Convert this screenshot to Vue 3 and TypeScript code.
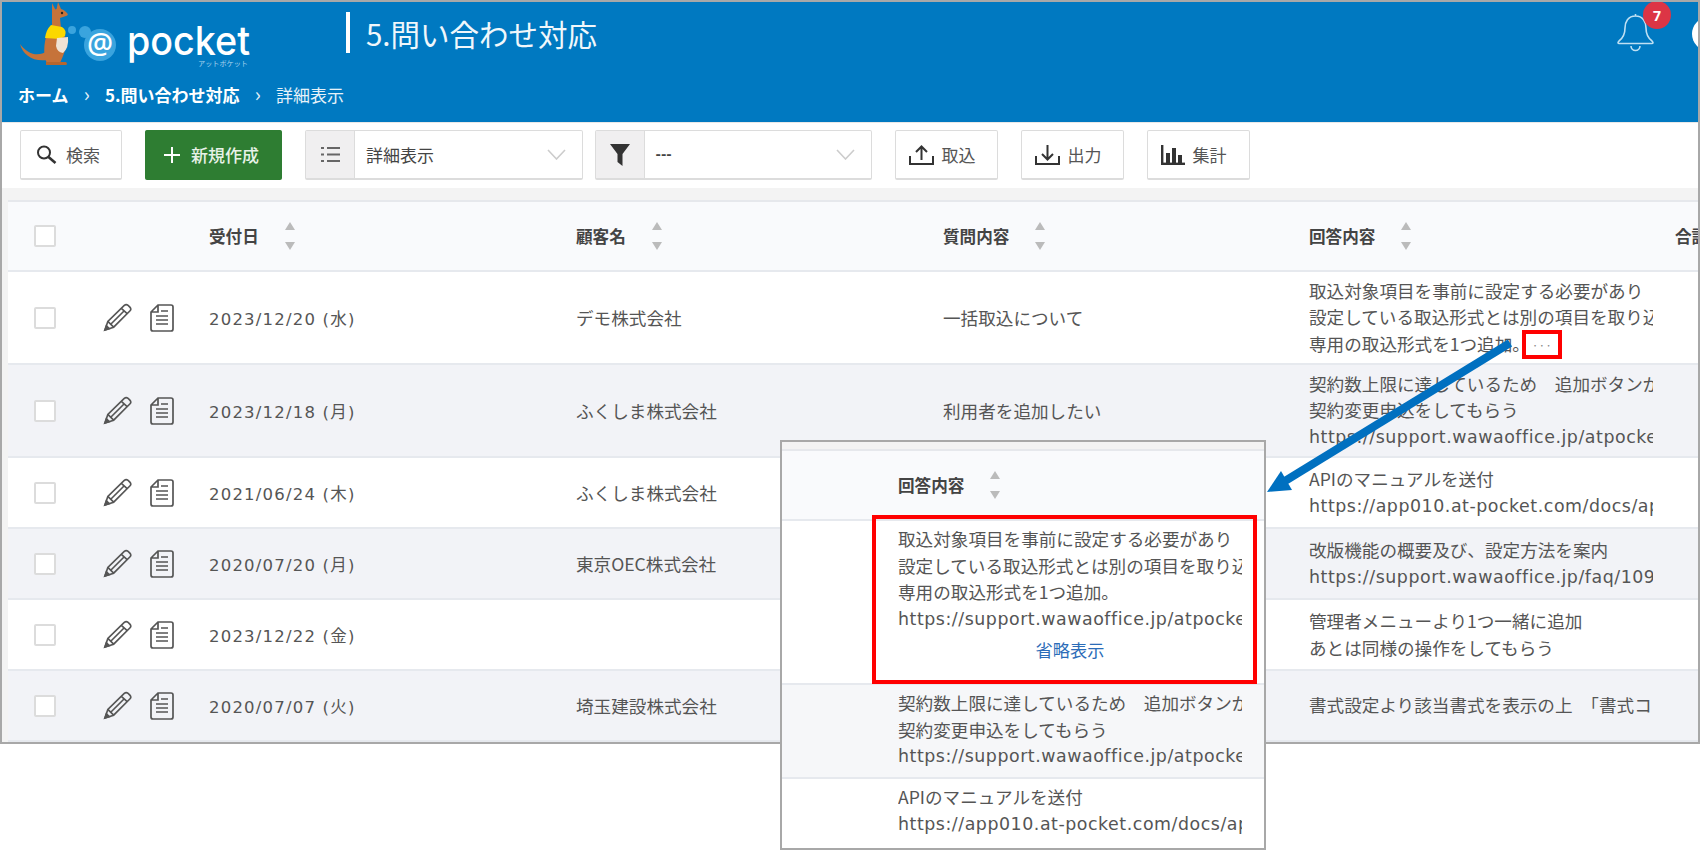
<template>
  <div class="page">
    <div class="frame">
      <header class="app-header">
        <div class="top-row">
          <svg class="logo" viewBox="2 2 260 70" width="260" height="70">
            <path d="M47 51C39 57 28 55 20 44C23 55 33 62 47 60Z" fill="#c6733a" />
            <path d="M52 26C45 33 43 48 45 59L47 63H60L63 56C67 48 66 36 62 28Z" fill="#c6733a" />
            <path d="M46 62H66Q68 64 66 65H46Z" fill="#b5662f" />
            <path d="M52 3L56 11L52 14ZM58 2L61 9L56 12Z" fill="#c6733a" />
            <path d="M52 12C56 7 63 8 67 13Q69 15 66 16L60 18L61 28L52 27Z" fill="#c6733a" />
            <circle cx="62" cy="13" r="1.2" fill="#222" />
            <path d="M51 25L62 27Q67 30 65 36L60 39L45 38Q46 30 51 25Z" fill="#fbd800" />
            <path d="M57 38L68 37Q69 48 63 53Q57 52 56 46Z" fill="#efe2d4" />
            <circle cx="72" cy="30" r="4" fill="#3aa4de" />
            <circle cx="85" cy="32" r="6" fill="#3aa4de" />
            <circle cx="100" cy="45" r="16" fill="#3aa4de" />
            <text x="100" y="54" class="logo-at" text-anchor="middle">@</text>
            <text x="127" y="55" class="logo-word" textLength="123" lengthAdjust="spacingAndGlyphs">pocket</text>
            <text x="198" y="66" class="logo-kana" textLength="50" lengthAdjust="spacingAndGlyphs">アットポケット</text>
          </svg>
          <h1 class="page-title">5.問い合わせ対応</h1>
          <div class="bell">
            <svg viewBox="0 0 37 39" width="37" height="39" fill="none" stroke="#bfe0f3" stroke-width="1.6">
              <path d="M18.5 3C11 3 8 9 8 15C8 22 6 25 2 28Q0 30 2 30.5H35Q37 30 35 28C31 25 29 22 29 15C29 9 26 3 18.5 3ZM18.5 3V1" />
              <path d="M14 33a4.5 4.5 0 0 0 9 0" />
            </svg>
            <span class="badge">7</span>
          </div>
          <div class="avatar"></div>
        </div>
        <nav class="crumbs">
          <b>ホーム</b>
          <span class="sep">›</span>
          <b>5.問い合わせ対応</b>
          <span class="sep">›</span>
          <span>詳細表示</span>
        </nav>
      </header>

      <div class="toolbar">
        <button class="btn btn-search">
          <svg viewBox="0 0 21 19" width="21" height="19" fill="none" stroke="#333" stroke-width="2">
            <circle cx="8" cy="7.5" r="6" />
            <path d="M12.5 12L19.5 18" stroke-width="2.6" />
          </svg>
          検索
        </button>
        <button class="btn btn-new"><span class="plus"></span>新規作成</button>
        <div class="select select-view">
          <span class="select-icon">
            <svg viewBox="0 0 19 17" width="19" height="17" fill="#666">
              <rect x="0" y="1" width="3" height="2" /><rect x="6" y="1" width="13" height="2" />
              <rect x="0" y="7.5" width="3" height="2" /><rect x="6" y="7.5" width="13" height="2" />
              <rect x="0" y="14" width="3" height="2" /><rect x="6" y="14" width="13" height="2" />
            </svg>
          </span>
          <span class="select-value">詳細表示</span>
          <svg class="chevron" viewBox="0 0 19 11" width="19" height="11" fill="none" stroke="#ccc" stroke-width="1.6"><path d="M1 1L9.5 10L18 1" /></svg>
        </div>
        <div class="select select-filter">
          <span class="select-icon">
            <svg viewBox="0 0 20 22" width="20" height="22" fill="#333"><path d="M0 0H20L12.5 10V22L7.5 18V10Z" /></svg>
          </span>
          <span class="select-value">---</span>
          <svg class="chevron" viewBox="0 0 19 11" width="19" height="11" fill="none" stroke="#ccc" stroke-width="1.6"><path d="M1 1L9.5 10L18 1" /></svg>
        </div>
        <button class="btn btn-tool">
          <svg viewBox="0 0 25 20" width="25" height="20" fill="none" stroke="#333" stroke-width="2">
            <path d="M1 11V19H24V11M12.5 15V2M7 7L12.5 1.5L18 7" />
          </svg>
          取込
        </button>
        <button class="btn btn-tool">
          <svg viewBox="0 0 25 20" width="25" height="20" fill="none" stroke="#333" stroke-width="2">
            <path d="M1 11V19H24V11M12.5 0V14M7 9L12.5 14.5L18 9" />
          </svg>
          出力
        </button>
        <button class="btn btn-tool">
          <svg viewBox="0 0 24 20" width="24" height="20" fill="#333">
            <rect x="0" y="0" width="2.4" height="20" /><rect x="0" y="17.6" width="24" height="2.4" />
            <rect x="5" y="8" width="4" height="10" /><rect x="11" y="3" width="4" height="15" /><rect x="17" y="10" width="4" height="8" />
          </svg>
          集計
        </button>
      </div>

      <div class="table-wrap">
        <div class="row head">
          <div class="cell"><span class="check"></span></div>
          <div class="cell"></div>
          <div v-for="label in columns" :key="label" class="cell head-cell">
            {{ label }}<span v-if="label !== '合計'" class="sort"></span>
          </div>
        </div>
        <div
          v-for="(row, i) in rows"
          :key="i"
          class="row"
          :class="{ alt: i % 2 === 1, tall: row.answer.length > 2 }"
        >
          <div class="cell"><span class="check"></span></div>
          <div class="cell actions">
            <svg viewBox="0 0 30 30" width="29" height="29" fill="none" stroke="#555" stroke-width="1.7">
              <path d="M2 28L5 19L22 2.500Q24 1 26 2.500L28 4.500Q29.500 6.500 28 8L11 25ZM5 19L11 25M19 5.500L25 11M8 22L22 8" />
              <path d="M2 28L3.500 23.500L6.500 26.500Z" fill="#555" />
            </svg>
            <svg viewBox="0 0 24 28" width="24" height="28" fill="none" stroke="#555" stroke-width="1.7">
              <path d="M8 1H21Q23 1 23 3V25Q23 27 21 27H3Q1 27 1 25V8ZM8 1V8H1M6 12H18M6 16H18M6 20H18M11 7H18" />
            </svg>
          </div>
          <div class="cell date">{{ row.date }}</div>
          <div class="cell">{{ row.customer }}</div>
          <div class="cell">{{ row.question }}</div>
          <div class="cell">
            <div class="answer">
              <div v-for="line in row.answer" :key="line" :class="{ url: line.startsWith('http') }">
                {{ line }}<span v-if="row.truncated && line === row.answer[2]" class="more">···</span>
              </div>
            </div>
          </div>
          <div class="cell"></div>
        </div>
      </div>
    </div>

    <div class="popup">
      <div class="pop-band"></div>
      <div class="pop-row pop-head"><span class="head-cell">回答内容<span class="sort"></span></span></div>
      <div class="pop-row">
        <div class="answer">
          <div>取込対象項目を事前に設定する必要があり</div>
          <div>設定している取込形式とは別の項目を取り込</div>
          <div>専用の取込形式を1つ追加。</div>
          <div class="url">https://support.wawaoffice.jp/atpocket/</div>
          <div class="collapse">省略表示</div>
        </div>
      </div>
      <div class="pop-row pop-alt">
        <div class="answer">
          <div>契約数上限に達しているため　追加ボタンが</div>
          <div>契約変更申込をしてもらう</div>
          <div class="url">https://support.wawaoffice.jp/atpocket/</div>
        </div>
      </div>
      <div class="pop-row">
        <div class="answer">
          <div>APIのマニュアルを送付</div>
          <div class="url">https://app010.at-pocket.com/docs/api/</div>
        </div>
      </div>
      <div class="red-box"></div>
    </div>

    <svg class="arrow" viewBox="0 0 1700 851" width="1700" height="851">
      <path d="M1510 343L1285 481" stroke="#0070c0" stroke-width="8" />
      <path d="M1267 492L1281 471L1292 490Z" fill="#0070c0" />
    </svg>
  </div>
</template>

<script setup lang="ts">
interface TableRow {
  date: string
  customer: string
  question: string
  answer: string[]
  truncated?: boolean
}

const columns = ['受付日', '顧客名', '質問内容', '回答内容', '合計']

const rows: TableRow[] = [
  {
    date: '2023/12/20 (水)',
    customer: 'デモ株式会社',
    question: '一括取込について',
    answer: ['取込対象項目を事前に設定する必要があり', '設定している取込形式とは別の項目を取り込', '専用の取込形式を1つ追加。'],
    truncated: true,
  },
  {
    date: '2023/12/18 (月)',
    customer: 'ふくしま株式会社',
    question: '利用者を追加したい',
    answer: ['契約数上限に達しているため　追加ボタンが', '契約変更申込をしてもらう', 'https://support.wawaoffice.jp/atpocket/'],
  },
  {
    date: '2021/06/24 (木)',
    customer: 'ふくしま株式会社',
    question: '',
    answer: ['APIのマニュアルを送付', 'https://app010.at-pocket.com/docs/api/'],
  },
  {
    date: '2020/07/20 (月)',
    customer: '東京OEC株式会社',
    question: '',
    answer: ['改版機能の概要及び、設定方法を案内', 'https://support.wawaoffice.jp/faq/10999/'],
  },
  {
    date: '2023/12/22 (金)',
    customer: '',
    question: '',
    answer: ['管理者メニューより1つ一緒に追加', 'あとは同様の操作をしてもらう'],
  },
  {
    date: '2020/07/07 (火)',
    customer: '埼玉建設株式会社',
    question: '',
    answer: ['書式設定より該当書式を表示の上　「書式コピー」'],
  },
]
</script>

<style>
html,
body {
  margin: 0;
  background: #fff;
}
</style>

<style scoped>
.page {
  position: relative;
  width: 1700px;
  height: 851px;
  overflow: hidden;
  font-family: "Noto Sans CJK JP", "Noto Sans", sans-serif;
  color: #555;
  background: #fff;
}
.frame {
  box-sizing: border-box;
  width: 1700px;
  height: 744px;
  border: 2px solid #a8a8a8;
  background: #f3f3f3;
  overflow: hidden;
}

/* header */
.app-header {
  height: 120px;
  background: #0079c1;
  color: #fff;
  overflow: hidden;
}
.top-row {
  display: flex;
  height: 77px;
}
.logo {
  flex-shrink: 0;
}
.logo-at {
  font: 500 29px "Noto Sans", sans-serif;
  fill: #fff;
}
.logo-word {
  font: 500 40px Inter, sans-serif;
  fill: #fff;
}
.logo-kana {
  font: 400 7px "Noto Sans CJK JP", sans-serif;
  fill: #a8d4ee;
}
.page-title {
  flex-shrink: 0;
  margin: 10px 0 0 84px;
  height: 41px;
  border-left: 4px solid #fff;
  padding-left: 16px;
  font-size: 29.500px;
  font-weight: 400;
  line-height: 42px;
  color: #f0f7fb;
  white-space: nowrap;
}
.bell {
  position: relative;
  margin: 11px 0 0 auto;
  width: 37px;
  height: 39px;
  flex-shrink: 0;
}
.badge {
  position: absolute;
  left: 26px;
  top: -12px;
  width: 28px;
  height: 28px;
  border-radius: 50%;
  background: #dc3545;
  color: #fff;
  font: 700 14px/30px "Noto Sans", sans-serif;
  text-align: center;
}
.avatar {
  flex-shrink: 0;
  margin: 15px -28px 0 38px;
  width: 34px;
  height: 34px;
  border-radius: 50%;
  background: #fff;
}
.crumbs {
  display: flex;
  align-items: center;
  padding-left: 16px;
  height: 30px;
  font-size: 17px;
  color: #e6f2f9;
}
.crumbs b {
  color: #fff;
}
.sep {
  width: 36.500px;
  text-align: center;
  font-size: 20px;
  line-height: 26px;
}

/* toolbar */
.toolbar {
  display: flex;
  align-items: center;
  gap: 23px;
  box-sizing: border-box;
  height: 66px;
  padding: 0 0 1px 18px;
  background: #fff;
  border-top: 1px solid #e8e8e8;
}
.btn {
  display: flex;
  align-items: center;
  box-sizing: border-box;
  height: 50px;
  padding: 0;
  border: 1px solid #dcdcdc;
  border-bottom-width: 2px;
  border-radius: 2px;
  background: #fff;
  color: #555;
  font: 400 17px "Noto Sans CJK JP", sans-serif;
}
.btn-search {
  width: 102px;
  padding-left: 15px;
  gap: 9px;
}
.btn-new {
  width: 137px;
  padding-left: 18px;
  background: #2e7d32;
  border-color: #2e7d32;
  color: #e8f2e8;
  font-weight: 500;
}
.plus {
  position: relative;
  width: 16px;
  height: 16px;
  margin-right: 11px;
  background:
    linear-gradient(#fff, #fff) center / 100% 2px no-repeat,
    linear-gradient(#fff, #fff) center / 2px 100% no-repeat;
}
.btn-tool {
  width: 103px;
  padding-left: 13px;
  gap: 8px;
}
.select {
  display: flex;
  align-items: center;
  box-sizing: border-box;
  height: 50px;
  border: 1px solid #dcdcdc;
  border-bottom-width: 2px;
  border-radius: 2px;
  font-size: 17px;
  color: #444;
}
.select-view {
  width: 278px;
}
.select-filter {
  width: 277px;
  margin-left: -11.500px;
}
.select-icon {
  display: flex;
  align-items: center;
  justify-content: center;
  width: 48px;
  height: 100%;
  background: #f0eff0;
  border-right: 1px solid #dcdcdc;
  flex-shrink: 0;
}
.select-view .select-value {
  margin-left: 11px;
}
.select-filter .select-value {
  margin-left: 11px;
  font-family: "DejaVu Sans", sans-serif;
  font-weight: 700;
  font-size: 13px;
}
.chevron {
  margin-left: auto;
  margin-right: 16px;
}

/* table */
.table-wrap {
  margin: 12px 0 0 6px;
  border-top: 2px solid #e6e8ec;
  background: #fff;
}
.row {
  display: grid;
  grid-template-columns: 80px 121px 367px 367px 366px 366px 100px;
  box-sizing: border-box;
  height: 71px;
  border-bottom: 2px solid #e6e9ee;
  font-size: 17.600px;
}
.row.head {
  height: 70px;
  background: #f9fafc;
}
.row.tall {
  height: 93px;
}
.row.alt {
  background: #f2f3f7;
}
.cell {
  display: flex;
  align-items: center;
  white-space: nowrap;
}
.check {
  box-sizing: border-box;
  width: 22px;
  height: 22px;
  margin-left: 26px;
  border: 2px solid #dcdcdc;
  border-radius: 2px;
  background: #fff;
}
.actions {
  gap: 18px;
  padding-left: 15px;
}
.date {
  font-family: "DejaVu Sans", "Noto Sans CJK JP", sans-serif;
  font-size: 16.500px;
  letter-spacing: 1.200px;
}
.head-cell {
  display: flex;
  align-items: center;
  color: #444;
  font-size: 16.600px;
  font-weight: 700;
  white-space: nowrap;
}
.sort {
  display: flex;
  flex-direction: column;
  justify-content: space-between;
  width: 11px;
  height: 28px;
  margin-left: 26px;
  flex-shrink: 0;
}
.sort::before,
.sort::after {
  content: "";
  width: 0;
  height: 0;
  border-left: 5.500px solid transparent;
  border-right: 5.500px solid transparent;
}
.sort::before {
  border-bottom: 8px solid #bbb;
}
.sort::after {
  border-top: 8px solid #bbb;
}
.answer {
  width: 344px;
  overflow-x: clip;
  font-size: 17.600px;
  line-height: 26.600px;
  white-space: nowrap;
}
.url {
  font-family: "DejaVu Sans", "Noto Sans CJK JP", sans-serif;
  font-size: 17.400px;
  letter-spacing: 0.540px;
}
.more {
  display: inline-block;
  width: 32px;
  height: 21px;
  margin-left: -4px;
  outline: 4px solid #f00;
  color: #888;
  font-size: 12px;
  line-height: 21px;
  text-align: center;
  vertical-align: 1px;
}

/* enlarged popup */
.popup {
  position: absolute;
  left: 780px;
  top: 440px;
  box-sizing: border-box;
  width: 486px;
  height: 410px;
  border: 2px solid #a8a8a8;
  background: #fff;
}
.pop-band {
  height: 7px;
  background: #f3f3f3;
  border-bottom: 2px solid #e6e8ec;
}
.pop-row {
  box-sizing: border-box;
  padding: 5px 0 0 116px;
  border-bottom: 2px solid #e6e9ee;
  height: 164px;
}
.pop-head {
  display: flex;
  align-items: center;
  padding-top: 0;
  height: 70px;
  background: #f9fafc;
}
.pop-alt {
  height: 94px;
  background: #f6f7f9;
}
.pop-row:last-of-type {
  border-bottom: none;
}
.collapse {
  margin-top: 5px;
  color: #2b6cb8;
  font-size: 17.200px;
  text-align: center;
}
.red-box {
  position: absolute;
  left: 90px;
  top: 73px;
  box-sizing: border-box;
  width: 385px;
  height: 169px;
  border: 4px solid #f00;
}
.arrow {
  position: absolute;
  left: 0;
  top: 0;
  pointer-events: none;
}
</style>
